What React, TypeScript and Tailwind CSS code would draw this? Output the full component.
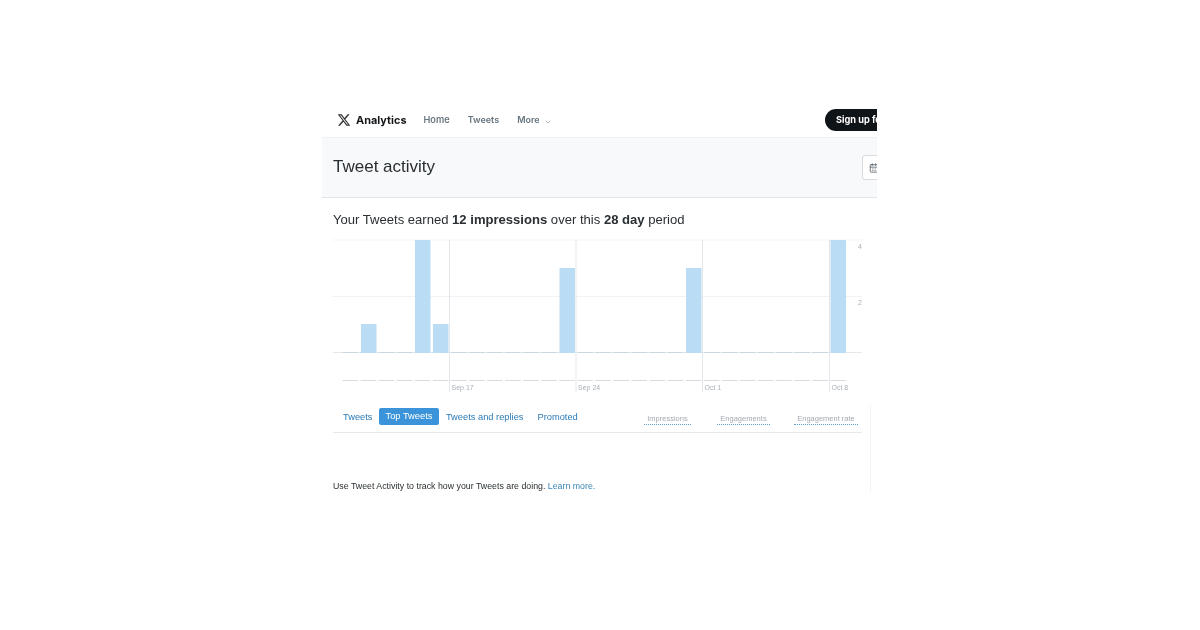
import { CalendarDays, ChevronDown } from 'lucide-react';

const bars = [
    { x: 361, top: 324 },
    { x: 415, top: 240 },
    { x: 433, top: 324 },
    { x: 559.5, top: 268 },
    { x: 686, top: 268 },
    { x: 830.5, top: 240 },
];

const weekLines = [
    { x: 449.5, label: 'Sep 17' },
    { x: 576, label: 'Sep 24' },
    { x: 702.5, label: 'Oct 1' },
    { x: 829.5, label: 'Oct 8' },
];

const dashes = Array.from({ length: 28 }, (_, i) => 342.5 + i * 18.07);

function Chart() {
    return (
        <svg width="530" height="154" viewBox="333 239 530 154" className="block">
            <line x1="333" x2="862" y1="240" y2="240" stroke="#f0f3f5" />
            <line x1="333" x2="862" y1="296.5" y2="296.5" stroke="#f0f3f5" />
            <line x1="333" x2="862" y1="352.5" y2="352.5" stroke="#e4e8eb" />
            {weekLines.map((w) => (
                <g key={w.label}>
                    <line x1={w.x} x2={w.x} y1="240" y2="392" stroke="#e3e7eb" />
                    <text x={w.x + 2} y="390" fontSize="7" fill="#a9b1b8">{w.label}</text>
                </g>
            ))}
            {dashes.map((x) => (
                <g key={x}>
                    <line x1={x} x2={x + 15.5} y1="380.5" y2="380.5" stroke="#d6dce0" />
                    <line x1={x} x2={x + 15.5} y1="352.5" y2="352.5" stroke="#ccd6dd" />
                </g>
            ))}
            {bars.map((b) => (
                <rect key={b.x} x={b.x} y={b.top} width="15.5" height={353 - b.top} fill="#bbdcf5" />
            ))}
            <text x="858" y="249" fontSize="7" fill="#a9b1b8">4</text>
            <text x="858" y="305" fontSize="7" fill="#a9b1b8">2</text>
        </svg>
    );
}

export default function App() {
    return (
        <div className="min-h-[630px] bg-white pt-[102px] pl-[322px] font-['Liberation_Sans',sans-serif]">
            <div className="w-[555px] overflow-hidden blur-[0.35px]">
                {/* top nav */}
                <div className="flex h-[36px] items-center border-b border-[#eef1f3] pt-[1px] pl-[15px]">
                    <svg viewBox="0 0 24 24" className="h-[14px] w-[14px] fill-[#333]">
                        <path d="M18.244 2.25h3.308l-7.227 8.26 8.502 11.24H16.17l-5.214-6.817L4.99 21.75H1.68l7.73-8.835L1.254 2.25H8.08l4.713 6.231zm-1.161 17.52h1.833L7.084 4.126H5.117z" />
                    </svg>
                    <span className="ml-[5px] font-['Inter',sans-serif] text-[10.9px] font-bold text-[#14171a]">Analytics</span>
                    <span className="ml-[17px] font-['Inter',sans-serif] text-[9.2px] font-semibold text-[#66757f]">Home</span>
                    <span className="ml-[18px] font-['Inter',sans-serif] text-[9px] font-semibold text-[#66757f]">Tweets</span>
                    <span className="ml-[18px] font-['Inter',sans-serif] text-[9px] font-semibold text-[#66757f]">More</span>
                    <ChevronDown className="ml-[4px] mt-[3px] h-[8px] w-[8px] text-[#8a98a3]" />
                    <div className="ml-auto mr-[-40px] flex h-[22px] w-[92px] shrink-0 items-center rounded-full bg-[#0f1419] pl-[11px] font-['Inter',sans-serif] text-[9.2px] font-bold whitespace-nowrap text-white">
                        Sign up for free
                    </div>
                </div>

                {/* title band */}
                <div className="flex h-[60px] items-center border-b border-[#dfe6ea] bg-[#f7f9fa] pl-[11px]">
                    <h1 className="mb-[3px] text-[17px] leading-none text-[#292f33]">Tweet activity</h1>
                    <div className="ml-auto mr-[-30px] flex h-[25px] w-[45px] items-center rounded-[3px] border border-[#d5dbe0] bg-white pl-[6px]">
                        <CalendarDays className="h-[10px] w-[10px] text-[#555f66]" />
                    </div>
                </div>

                <p className="mt-[14px] ml-[11px] h-[16px] text-[13.07px] leading-[16px] text-[#292f33]">
                    Your Tweets earned <b>12 impressions</b> over this <b>28 day</b> period
                </p>

                <div className="mt-[11px] ml-[11px]">
                    <Chart />
                </div>

                <div className="relative ml-[11px] mt-[15px] w-[529px]">
                    {/* tabs */}
                    <div className="flex h-[25px] items-start border-b border-[#e6e9eb] text-[9.3px] text-[#2b7bb9]">
                        <span className="ml-[10px] mt-[3px]">Tweets</span>
                        <span className="ml-[6.5px] flex h-[17px] w-[60px] items-center justify-center rounded-[2px] bg-[#3b94d9] text-white">Top Tweets</span>
                        <span className="ml-[7px] mt-[3px]">Tweets and replies</span>
                        <span className="ml-[14px] mt-[3px]">Promoted</span>
                        <div className="ml-auto mr-[4px] flex gap-[24px] text-[7.5px] text-[#a3abb2]">
                            <span className="mt-[6px] mr-[2px] flex h-[11px] w-[47px] items-center justify-center border-b border-dotted border-[#5b9fd0]">Impressions</span>
                            <span className="mt-[6px] flex h-[11px] w-[53px] items-center justify-center border-b border-dotted border-[#5b9fd0]">Engagements</span>
                            <span className="mt-[6px] flex h-[11px] w-[64px] items-center justify-center border-b border-dotted border-[#5b9fd0]">Engagement rate</span>
                        </div>
                    </div>
                    <p className="mt-[47px] text-[8.8px] leading-[12px] text-[#292f33]">
                        Use Tweet Activity to track how your Tweets are doing. <span className="text-[#3b83b5]">Learn more.</span>
                    </p>
                    {/* faint side rule */}
                    <div className="absolute top-[-3px] left-[537px] h-[87px] w-px bg-[#f1f3f5]" />
                </div>
            </div>
        </div>
    );
}
